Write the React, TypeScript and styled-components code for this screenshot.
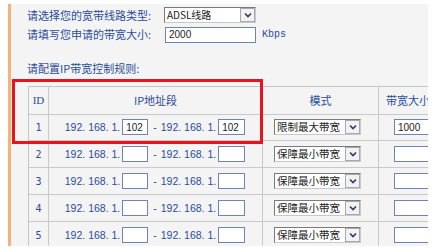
import React from "react";
import styled, { createGlobalStyle } from "styled-components";

const GlobalStyle = createGlobalStyle`
  html, body { margin: 0; padding: 0; background: #ffffff; }
  body { width: 442px; height: 251px; overflow: hidden; }
`;

const TEXT = "#2a4c9c";
const CJK = `"Noto Sans CJK SC", "Noto Sans", sans-serif`;
const LAT = `"Liberation Sans", "Noto Sans CJK SC", sans-serif`;

const Frame = styled.div`
  margin: 4px 0 0 8px;
  width: 420px;
  height: 242px;
  box-sizing: border-box;
  border-left: 3px solid #f6b27c;
  background: #f4f4f4;
  overflow: hidden;
  padding-left: 16px;
  font-family: ${CJK};
  font-size: 11px;
  color: ${TEXT};
`;

const FormRow = styled.div<{ $h: number }>`
  display: flex;
  align-items: center;
  height: ${(p) => p.$h}px;
`;

const Label = styled.span<{ $w?: number }>`
  display: inline-block;
  width: ${(p) => (p.$w ? `${p.$w}px` : "auto")};
  white-space: nowrap;
  line-height: 1;
`;

const Field = styled.div<{ $w: number }>`
  box-sizing: border-box;
  width: ${(p) => p.$w}px;
  height: 16px;
  flex-shrink: 0;
  border: 1px solid #6f84b4;
  background: #fff;
  font-family: ${LAT};
  font-size: 10px;
  color: #222;
  display: flex;
  align-items: center;
  padding-left: 3px;
`;

const Unit = styled.span`
  font-family: "Liberation Mono", monospace;
  font-size: 10px;
  color: ${TEXT};
  margin-left: 6px;
`;

const SelectBox = styled.div<{ $w: number }>`
  box-sizing: border-box;
  width: ${(p) => p.$w}px;
  height: 16px;
  flex-shrink: 0;
  border: 1px solid #7a7a7a;
  border-right-color: #c8c8c8;
  border-bottom-color: #c8c8c8;
  background: #fff;
  display: flex;
  align-items: stretch;
`;

const SelectText = styled.span<{ $size?: number }>`
  flex: 1;
  display: flex;
  align-items: center;
  padding-left: 2px;
  font-family: ${CJK};
  font-size: ${(p) => p.$size || 10.5}px;
  color: #222;
  white-space: nowrap;
  overflow: hidden;
  line-height: 1;
`;

const ArrowBtn = styled.span`
  box-sizing: border-box;
  width: 15px;
  flex-shrink: 0;
  border: 1px solid #a9a9a9;
  background: #f2f2f2;
  display: flex;
  align-items: center;
  justify-content: center;
`;

const Arrow = () => (
  <svg width="8" height="6" viewBox="0 0 8 6">
    <path d="M1 1.5 L4 4.5 L7 1.5" fill="none" stroke="#2a3a6a" strokeWidth="1.6" />
  </svg>
);

const Select = ({ w, value, size }: { w: number; value: string; size?: number }) => (
  <SelectBox $w={w}>
    <SelectText $size={size}>{value}</SelectText>
    <ArrowBtn>
      <Arrow />
    </ArrowBtn>
  </SelectBox>
);

const Spacer = styled.div<{ $h: number }>`
  height: ${(p) => p.$h}px;
`;

const TableWrap = styled.div`
  position: relative;
  margin-left: 1px;
`;

const Grid = styled.div`
  display: grid;
  grid-template-columns: 20px 214px 116px 90px;
  grid-auto-rows: 27px;
  border-top: 1px solid #c6c6c6;
  border-left: 1px solid #c6c6c6;
  width: max-content;
`;

const Cell = styled.div<{ $head?: boolean; $align?: string; $pl?: number }>`
  box-sizing: border-box;
  border-right: 1px solid #c9c9c9;
  border-bottom: 1px solid #c9c9c9;
  display: flex;
  align-items: center;
  justify-content: ${(p) => p.$align || "center"};
  padding-left: ${(p) => p.$pl || 0}px;
  height: ${(p) => (p.$head ? 28 : 27)}px;
  white-space: nowrap;
  color: ${TEXT};
`;

const HeadText = styled.span<{ $mono?: boolean }>`
  font-family: ${(p) => (p.$mono ? `"Liberation Serif", serif` : CJK)};
  font-size: 11px;
  line-height: 1;
`;

const IdText = styled.span`
  font-family: "DejaVu Sans Mono", monospace;
  font-size: 10px;
  color: ${TEXT};
`;

const IpText = styled.span`
  font-family: ${LAT};
  font-size: 10.5px;
  color: ${TEXT};
  line-height: 1;
`;

const IpGroup = styled.div`
  display: flex;
  align-items: center;
  gap: 2px;
  margin-left: -1px;
`;

const Dash = styled.span`
  font-family: ${LAT};
  font-size: 10.5px;
  margin: 0 2px 0 3px;
`;

const RedBox = styled.div`
  position: absolute;
  left: -16px;
  top: -7px;
  width: 251px;
  height: 65px;
  box-sizing: border-box;
  border: 3px solid #e8141c;
  pointer-events: none;
`;

const rows = [
  { id: "1", a: "102", b: "102", mode: "限制最大带宽", bw: "1000" },
  { id: "2", a: "", b: "", mode: "保障最小带宽", bw: "" },
  { id: "3", a: "", b: "", mode: "保障最小带宽", bw: "" },
  { id: "4", a: "", b: "", mode: "保障最小带宽", bw: "" },
  { id: "5", a: "", b: "", mode: "保障最小带宽", bw: "" },
];

export default function App() {
  return (
    <>
      <GlobalStyle />
      <Frame>
        <Spacer $h={3} />
        <FormRow $h={16}>
          <Label $w={137}>请选择您的宽带线路类型:</Label>
          <Select w={92} value="ADSL线路" size={10} />
        </FormRow>
        <Spacer $h={4} />
        <FormRow $h={15}>
          <Label $w={138}>请填写您申请的带宽大小:</Label>
          <Field $w={91}>2000</Field>
          <Unit>Kbps</Unit>
        </FormRow>
        <Spacer $h={18} />
        <FormRow $h={16}>
          <Label>请配置IP带宽控制规则:</Label>
        </FormRow>
        <Spacer $h={10} />
        <TableWrap>
          <Grid>
            <Cell $head>
              <HeadText $mono>ID</HeadText>
            </Cell>
            <Cell $head>
              <HeadText>IP地址段</HeadText>
            </Cell>
            <Cell $head>
              <HeadText>模式</HeadText>
            </Cell>
            <Cell $head $align="flex-start" $pl={7}>
              <HeadText>带宽大小</HeadText>
            </Cell>
            {rows.map((r) => (
              <React.Fragment key={r.id}>
                <Cell>
                  <IdText>{r.id}</IdText>
                </Cell>
                <Cell>
                  <IpGroup>
                    <IpText>192. 168. 1.</IpText>
                    <Field $w={26}>{r.a}</Field>
                    <Dash>-</Dash>
                    <IpText>192. 168. 1.</IpText>
                    <Field $w={27}>{r.b}</Field>
                  </IpGroup>
                </Cell>
                <Cell $align="flex-start" $pl={11}>
                  <Select w={87} value={r.mode} />
                </Cell>
                <Cell $align="flex-start" $pl={15}>
                  <Field $w={60}>{r.bw}</Field>
                </Cell>
              </React.Fragment>
            ))}
          </Grid>
          <RedBox />
        </TableWrap>
      </Frame>
    </>
  );
}
